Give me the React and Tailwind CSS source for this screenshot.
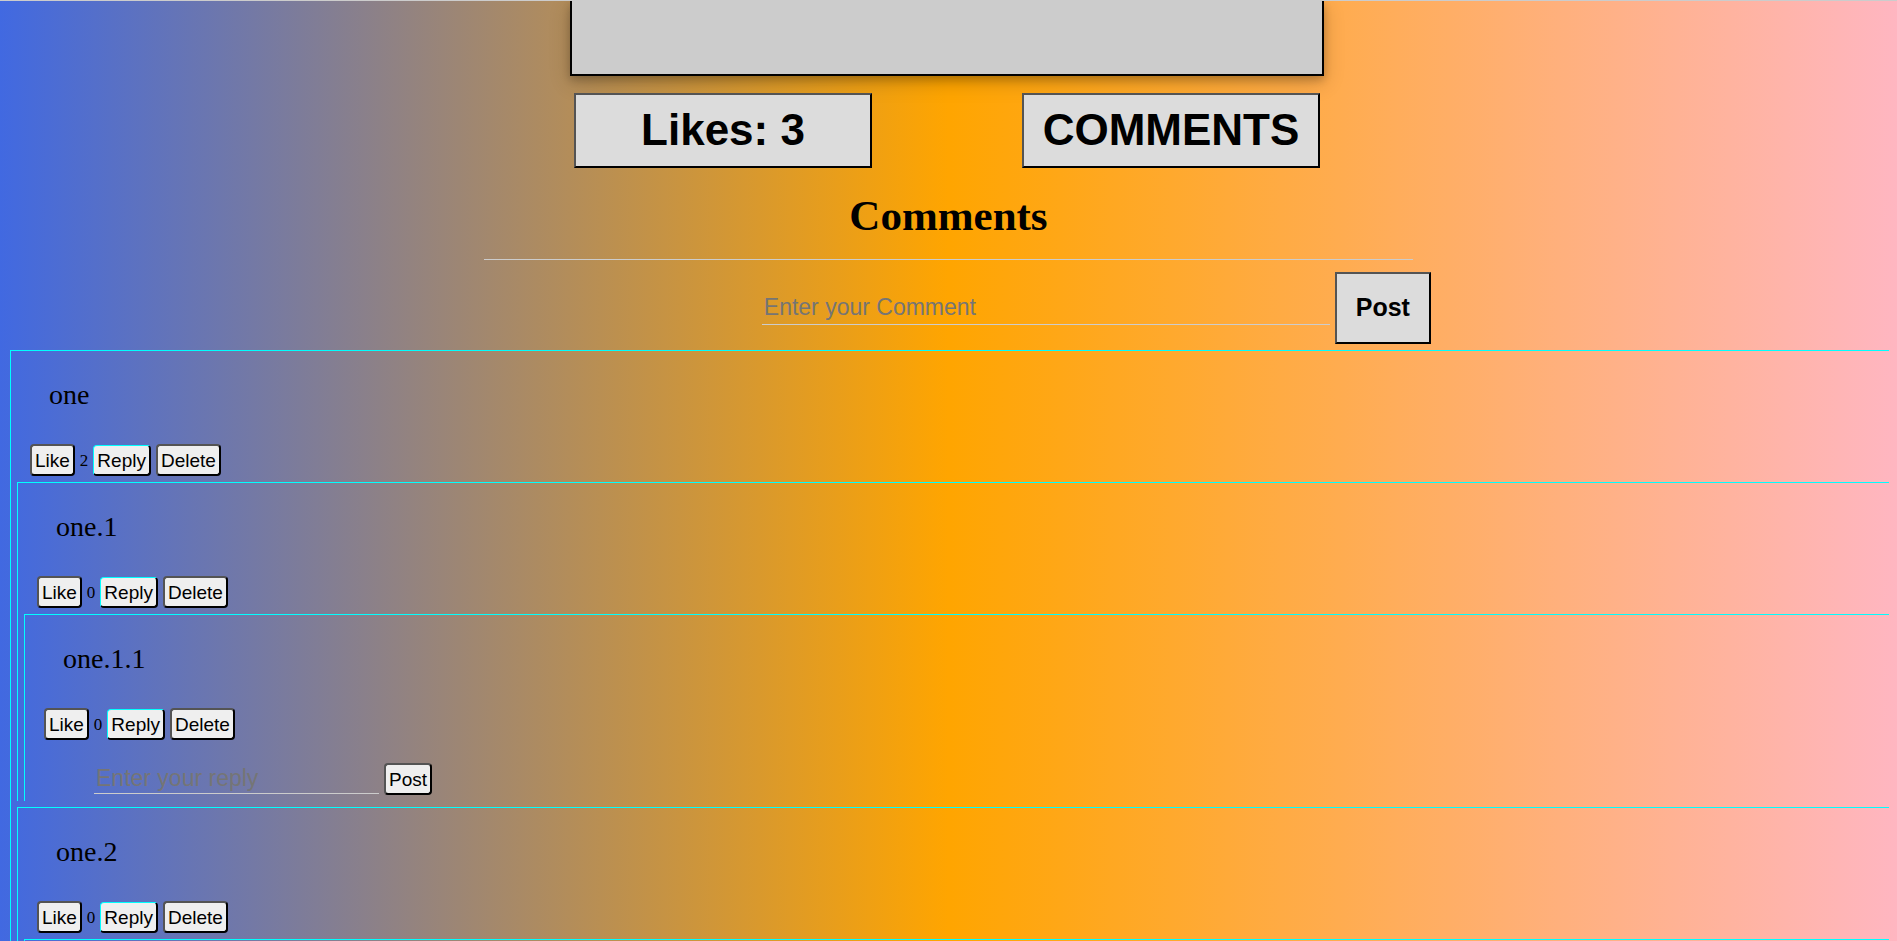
import React from "react";

const thread = {
  id: 1,
  text: "one",
  likes: 2,
  replies: [
    {
      id: 2,
      text: "one.1",
      likes: 0,
      replies: [{ id: 3, text: "one.1.1", likes: 0, replying: true, replies: [] }],
    },
    {
      id: 4,
      text: "one.2",
      likes: 0,
      replies: [{ id: 5, collapsed: true }],
    },
  ],
};

const largeButton =
  "border-2 border-black [border-style:outset] bg-[#dcdcdc] font-['Liberation_Sans',Arial,sans-serif] font-bold";
const smallButton =
  "h-8 rounded-[4px] border-2 border-black [border-style:outset] bg-[#efefef] px-[3px] font-['Liberation_Sans',Arial,sans-serif] text-[19px] leading-none";
const replyButton =
  "h-[31px] rounded-[4px] border-2 border-t border-l border-black border-t-[#0ff] border-l-[#0ff] [border-style:outset] bg-[#efefef] px-[3px] font-['Liberation_Sans',Arial,sans-serif] text-[19px] leading-none";
const lineInput =
  "border-b border-[#ccc] bg-transparent px-[2px] font-['Liberation_Sans',Arial,sans-serif] text-[23px] outline-none placeholder:text-[#757575]";

function Comment({ comment }) {
  if (comment.collapsed) {
    return <article className="mt-[6px] h-8 border-t border-l border-[#0ff]" />;
  }
  return (
    <article className="mt-[6px] border-t border-l border-[#0ff] pl-[6px]">
      <p className="pt-7 pb-[33px] pl-8 text-[28px] leading-8">{comment.text}</p>
      <div className="flex items-end gap-[5px] pl-[13px]">
        <button type="button" className={smallButton}>Like</button>
        <span className="pb-[3px] text-[17px] leading-6">{comment.likes}</span>
        <button type="button" className={replyButton}>Reply</button>
        <button type="button" className={smallButton}>Delete</button>
      </div>
      {comment.replying && (
        <form className="flex items-start gap-[5px] pt-[23px] pb-[6px] pl-[63px]">
          <input
            type="text"
            aria-label="Reply"
            placeholder="Enter your reply"
            className={`${lineInput} h-[31px] w-[285px]`}
          />
          <button type="button" className={smallButton}>Post</button>
        </form>
      )}
      {comment.replies.map((reply) => (
        <Comment key={reply.id} comment={reply} />
      ))}
    </article>
  );
}

export default function App() {
  return (
    <main className="h-screen overflow-hidden border-t border-[#ccc] bg-[linear-gradient(to_right,#4169e1,#ffa500,#ffb6c1)] font-['Liberation_Serif','Times_New_Roman',serif] text-black">
      <section className="flex flex-col items-center pr-[3px]">
        <div className="h-[75px] w-[754px] border-2 border-t-0 border-black bg-[#ccc] shadow-[0_4px_8px_0_rgba(0,0,0,0.2),0_6px_20px_0_rgba(0,0,0,0.19)]" />
        <div className="mt-[17px] flex w-[746px] justify-between">
          <button type="button" className={`${largeButton} h-[75px] w-[298px] pb-[2px] text-[44px] leading-none`}>
            Likes: 3
          </button>
          <button type="button" className={`${largeButton} h-[75px] w-[298px] pb-[2px] text-[44px] leading-none`}>
            COMMENTS
          </button>
        </div>
      </section>
      <h1 className="mx-auto w-[49%] border-b border-[#ccc] pt-[23px] pb-[18px] text-center text-[43px] leading-[50px] font-bold">
        Comments
      </h1>
      <form className="ml-[40%] flex items-center gap-[5px] pt-3 pl-[3px]">
        <input
          type="text"
          aria-label="Comment"
          placeholder="Enter your Comment"
          className={`${lineInput} h-[34px] w-[568px]`}
        />
        <button type="button" className={`${largeButton} h-[72px] w-24 text-[25px]`}>
          Post
        </button>
      </form>
      <section className="pr-2 pl-[10px]">
        <Comment comment={thread} />
      </section>
    </main>
  );
}
